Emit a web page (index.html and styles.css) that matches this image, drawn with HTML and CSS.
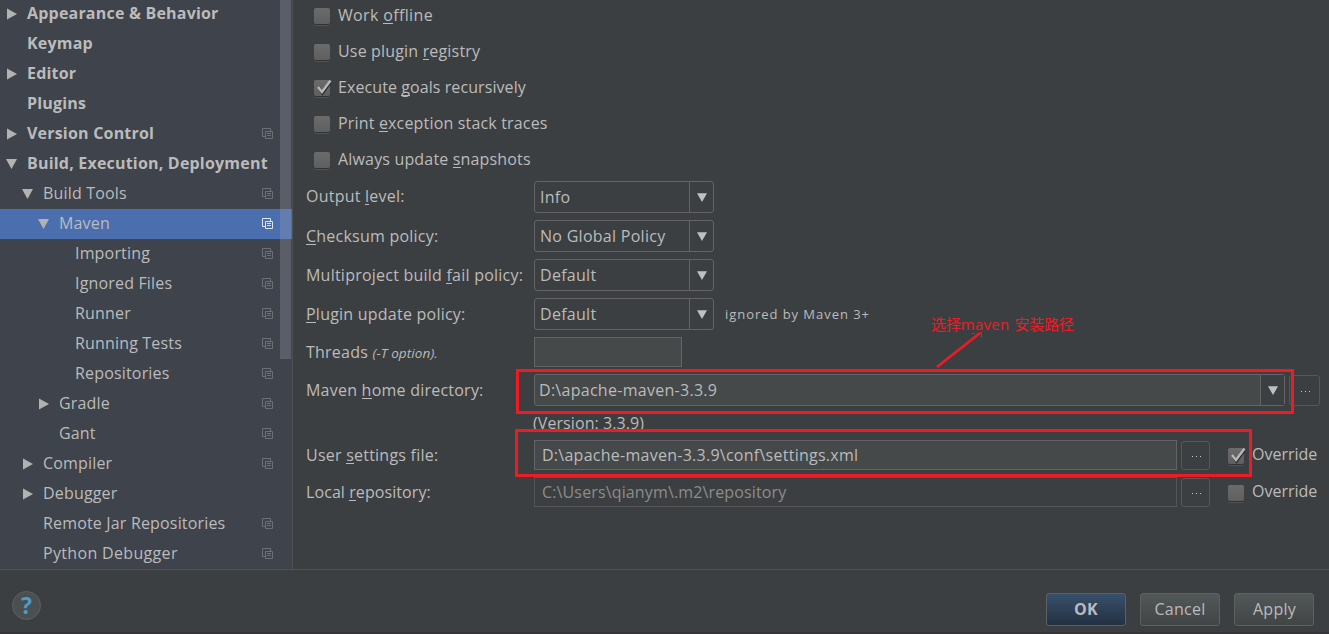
FILE: index.html
```html
<!DOCTYPE html>
<html lang="en">
<head>
<meta charset="utf-8">
<title>Settings</title>
<link rel="stylesheet" href="styles.css">
</head>
<body>
<svg class="defs" width="0" height="0">
  <symbol id="right" viewBox="0 0 10 12"><path d="M0 .5 10 6 0 11.5z" fill="#b2b2b2"/></symbol>
  <symbol id="down" viewBox="0 0 11 10"><path d="M0 0h11L5.5 10z" fill="#b2b2b2"/></symbol>
  <symbol id="arrow" viewBox="0 0 10 9"><path d="M0 .3h10L5 9z" fill="#c0c0c0"/></symbol>
  <symbol id="copy" viewBox="0 0 11 11"><path d="M3 8.500H.5v-8h8V3" fill="none" stroke="currentColor"/><path d="M3.500 3.500h7v7h-7z" fill="none" stroke="currentColor"/><path d="M5 5.500h4M5 7.500h4" stroke="currentColor"/></symbol>
  <symbol id="check" viewBox="0 0 16 16"><path d="M3 8 6.500 13.500 14.500 2.500" fill="none" stroke="#2b2b2b" stroke-width="2.400"/><path d="M2 7 6 12 14.500 .5" fill="none" stroke="#b8b8b8" stroke-width="2.400"/></symbol>
</svg>
<div class="window">
  <div class="main">
    <nav class="tree">
      <div class="node l0 bold"><svg class="tri"><use href="#right"/></svg><span>Appearance &amp; Behavior</span></div>
      <div class="node l0 bold"><i class="tri"></i><span>Keymap</span></div>
      <div class="node l0 bold"><svg class="tri"><use href="#right"/></svg><span>Editor</span></div>
      <div class="node l0 bold"><i class="tri"></i><span>Plugins</span></div>
      <div class="node l0 bold"><svg class="tri"><use href="#right"/></svg><span>Version Control</span><svg class="copy"><use href="#copy"/></svg></div>
      <div class="node l0 bold"><svg class="tri open"><use href="#down"/></svg><span>Build, Execution, Deployment</span></div>
      <div class="node l1"><svg class="tri open"><use href="#down"/></svg><span>Build Tools</span><svg class="copy"><use href="#copy"/></svg></div>
      <div class="node l2 selected"><svg class="tri open"><use href="#down"/></svg><span>Maven</span><svg class="copy"><use href="#copy"/></svg></div>
      <div class="node l3"><i class="tri"></i><span>Importing</span><svg class="copy"><use href="#copy"/></svg></div>
      <div class="node l3"><i class="tri"></i><span>Ignored Files</span><svg class="copy"><use href="#copy"/></svg></div>
      <div class="node l3"><i class="tri"></i><span>Runner</span><svg class="copy"><use href="#copy"/></svg></div>
      <div class="node l3"><i class="tri"></i><span>Running Tests</span><svg class="copy"><use href="#copy"/></svg></div>
      <div class="node l3"><i class="tri"></i><span>Repositories</span><svg class="copy"><use href="#copy"/></svg></div>
      <div class="node l2"><svg class="tri"><use href="#right"/></svg><span>Gradle</span><svg class="copy"><use href="#copy"/></svg></div>
      <div class="node l2"><i class="tri"></i><span>Gant</span><svg class="copy"><use href="#copy"/></svg></div>
      <div class="node l1"><svg class="tri"><use href="#right"/></svg><span>Compiler</span><svg class="copy"><use href="#copy"/></svg></div>
      <div class="node l1"><svg class="tri"><use href="#right"/></svg><span>Debugger</span></div>
      <div class="node l1"><i class="tri"></i><span>Remote Jar Repositories</span><svg class="copy"><use href="#copy"/></svg></div>
      <div class="node l1 python"><i class="tri"></i><span>Python Debugger</span><svg class="copy"><use href="#copy"/></svg></div>
      <div class="scrollbar"></div>
    </nav>
    <section class="panel">
      <div class="checks">
        <label class="check loose"><i class="box"></i><span>Work <u>o</u>ffline</span></label>
        <label class="check"><i class="box"></i><span>Use plugin <u>r</u>egistry</span></label>
        <label class="check tight"><i class="box"><svg><use href="#check"/></svg></i><span>Execute <u>g</u>oals recursively</span></label>
        <label class="check"><i class="box"></i><span>Print <u>e</u>xception stack traces</span></label>
        <label class="check"><i class="box"></i><span>Always update <u>s</u>napshots</span></label>
      </div>
      <div class="form">
        <div class="row"><label class="name raised">Output <u>l</u>evel:</label><div class="combo"><span>Info</span><b><svg><use href="#arrow"/></svg></b></div></div>
        <div class="row"><label class="name"><u>C</u>hecksum policy:</label><div class="combo"><span>No Global Policy</span><b><svg><use href="#arrow"/></svg></b></div></div>
        <div class="row"><label class="name">Multiproject build <u>f</u>ail policy:</label><div class="combo"><span>Default</span><b><svg><use href="#arrow"/></svg></b></div></div>
        <div class="row"><label class="name"><u>P</u>lugin update policy:</label><div class="combo"><span>Default</span><b><svg><use href="#arrow"/></svg></b></div><span class="hint">ignored by Maven 3+</span></div>
        <div class="row short"><label class="name lowered">Threads <em>(-T option).</em></label><div class="field threads"></div></div>
        <div class="row home"><label class="name">Maven <u>h</u>ome directory:</label><div class="combo wide"><span>D:\apache-maven-3.3.9</span><b><svg><use href="#arrow"/></svg></b></div><div class="browse tall"><i></i><i></i><i></i></div></div>
        <div class="version">(Version: 3.3.9)</div>
        <div class="row short"><label class="name">User <u>s</u>ettings file:</label><div class="field path">D:\apache-maven-3.3.9\conf\settings.xml</div><div class="browse"><i></i><i></i><i></i></div><label class="check over"><i class="box"><svg><use href="#check"/></svg></i><span>Override</span></label></div>
        <div class="row short"><label class="name tight">Local <u>r</u>epository:</label><div class="field path disabled">C:\Users\qianym\.m2\repository</div><div class="browse"><i></i><i></i><i></i></div><label class="check over"><i class="box"></i><span>Override</span></label></div>
      </div>
    </section>
  </div>
  <footer class="footer">
    <div class="help">?</div>
    <div class="buttons"><div class="btn ok">OK</div><div class="btn">Cancel</div><div class="btn apply">Apply</div></div>
  </footer>
  <div class="mark mark-home"></div>
  <div class="mark mark-settings"></div>
  <svg class="pointer" width="60" height="50" viewBox="0 0 60 50"><path d="M7 38 50 4" fill="none" stroke="#ed1c24" stroke-width="2.800"/><path d="M42 4.500h3M50 3.500h1.500v5" fill="none" stroke="#ed1c24"/></svg>
  <div class="note">选择<span class="latin">maven</span>安装路径</div>
</div>
</body>
</html>
```
FILE: styles.css
```css
* { box-sizing: border-box; }
body {
  margin: 0;
  background: #3c3f41;
  color: #bbb;
  font: 16px/22px "Open Sans", "Noto Sans CJK SC", sans-serif;
  letter-spacing: .17px;
  overflow: hidden;
}
.defs { position: absolute; }
.window { position: relative; width: 1329px; height: 634px; display: flex; flex-direction: column; overflow: hidden; border-bottom: 2px solid #353436; }
.main { display: flex; height: 570px; border-bottom: 1px solid #505354; }

/* Settings tree */
.tree { position: relative; width: 293px; flex: none; height: 569px; overflow: hidden; background: #3f434b; border-right: 1px solid #4f5052; }
.node { display: flex; align-items: center; height: 30px; padding-right: 19px; white-space: nowrap; }
.node:first-child { margin-top: -1px; }
.node span { margin-top: -2px; }
.l0 { padding-left: 7px; }
.l1 { padding-left: 23px; }
.l2 { padding-left: 39px; }
.l3 { padding-left: 55px; }
.bold { font-weight: 700; letter-spacing: .2px; }
.python { letter-spacing: .33px; }
.tri { width: 10px; height: 12px; margin-right: 10px; flex: none; }
.tri.open { width: 11px; height: 10px; margin: 0 10px 0 -1px; }
.copy { width: 11px; height: 11px; margin: 0 0 1px auto; color: #6b7074; flex: none; }
.selected { background: #4b6eaf; }
.selected .copy { color: #e0e4ea; }
.scrollbar { position: absolute; top: 0; right: 1px; width: 11px; height: 359px; background: rgba(166, 166, 180, .28); }

/* Settings panel */
.panel { flex: 1; padding-left: 13px; }
.panel u { text-decoration: none; box-shadow: inset 0 -1px #bbb; display: inline-block; height: 20px; line-height: 22px; vertical-align: top; }
.checks { padding-left: 8px; margin-top: -3px; height: 184px; }
.check { display: flex; align-items: center; height: 36px; white-space: nowrap; }
.loose { letter-spacing: .35px; }
.tight { letter-spacing: .08px; }
.box { position: relative; width: 16px; height: 16px; margin: 1px 8px 0 0; border-radius: 2px; background: linear-gradient(#6b6b6b, #5f5f5f); box-shadow: 0 1px #303234, 0 2px #505354; flex: none; }
.checks .box { margin-top: 2px; }
.box svg { position: absolute; top: 0; left: 2px; width: 16px; height: 16px; overflow: visible; }
.row { display: flex; align-items: center; height: 32px; margin-bottom: 7px; }
.row.short { height: 30px; }
.name { width: 228px; flex: none; white-space: nowrap; padding-bottom: 1px; letter-spacing: .23px; }
.name.tight { letter-spacing: .08px; }
.raised { padding-bottom: 3px; }
.lowered { padding: 1px 0 0; }
.name em { font-size: 13.500px; letter-spacing: .1px; }
.combo { display: flex; width: 180px; height: 32px; border: 1px solid #646464; border-radius: 3px; letter-spacing: .28px; }
.combo span { flex: 1; padding-left: 5px; line-height: 31px; }
.combo b { width: 24px; border-left: 1px solid #646464; display: flex; align-items: center; justify-content: center; }
.combo svg { width: 10px; height: 9px; margin-top: 1px; }
.wide { width: 751px; background: #45494a; }
.wide span { padding-left: 4px; }
.wide b { background: #3c3f41; }
.hint { margin-left: 11px; font-size: 13px; letter-spacing: .95px; }
.field { height: 30px; border: 1px solid #646464; background: #45494a; line-height: 29px; letter-spacing: .26px; }
.threads { width: 148px; }
.path { width: 643px; padding-left: 7px; }
.disabled { background: #3c3f41; color: #8c8c8c; border-color: #555; letter-spacing: .14px; }
.home { margin-bottom: 0; }
.version { height: 34px; padding-left: 227px; line-height: 34px; letter-spacing: .08px; }
.browse { display: flex; gap: 3px; align-items: center; justify-content: center; width: 29px; height: 29px; margin: 1px 0 0 4px; padding-left: 2px; border: 1px solid #555859; border-radius: 3px; }
.browse i { width: 1px; height: 1px; margin-top: 2px; background: #c8c8c8; }
.tall { width: 31px; height: 31px; }
.over { height: 28px; margin-left: 18px; letter-spacing: 0; }
.over span { margin-top: -2px; }

/* Dialog buttons */
.footer { display: flex; justify-content: space-between; padding: 21px 15px 0 12px; }
.help { width: 29px; height: 29px; border: 1px solid #5d6061; border-radius: 50%; background: #4b4f50; color: #4a9ccc; font-size: 23px; line-height: 26px; font-weight: 700; text-align: center; letter-spacing: 0; }
.buttons { display: flex; gap: 14px; padding-top: 2px; }
.btn { width: 80px; height: 33px; border: 1px solid #5e6162; border-radius: 3px; background: linear-gradient(#525758, #414546); text-align: center; line-height: 30px; letter-spacing: .26px; }
.ok { background: linear-gradient(#384f6b, #233143); font-weight: 700; }
.apply { padding-left: 1px; }

/* Annotations drawn over the dialog */
.mark { position: absolute; border: 3px solid #ed1c24; }
.mark-home { left: 516px; top: 369px; width: 778px; height: 45px; }
.mark-settings { left: 515px; top: 429px; width: 737px; height: 48px; }
.pointer { position: absolute; left: 930px; top: 329px; }
.note { position: absolute; left: 931px; top: 313px; color: #ed1c24; font: 15px/22px "Noto Sans CJK SC", sans-serif; letter-spacing: -.1px; white-space: nowrap; }
.latin { font-family: "Open Sans", sans-serif; letter-spacing: .25px; margin-right: 5px; }
```
